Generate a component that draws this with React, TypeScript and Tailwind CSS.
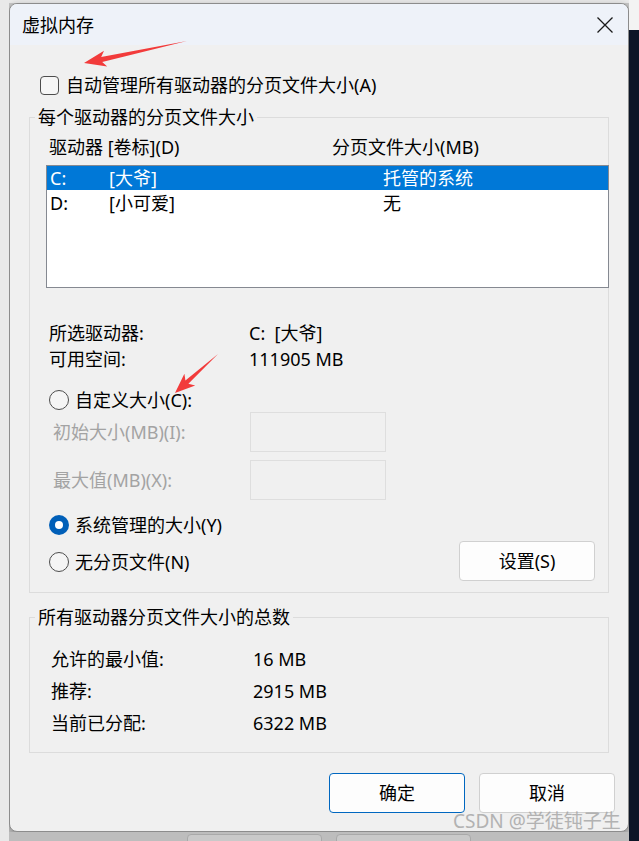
import React from "react";

function Radio({ checked }: { checked?: boolean }) {
  if (checked) {
    return (
      <div className="w-[20px] h-[20px] rounded-full bg-[#005fb8] flex items-center justify-center shrink-0">
        <div className="w-[8px] h-[8px] rounded-full bg-white" />
      </div>
    );
  }
  return <div className="w-[20px] h-[20px] rounded-full border border-[#4d4d4d] bg-[#f5f5f5] shrink-0" />;
}

export default function App() {
  return (
    <div className="relative w-[639px] h-[841px] overflow-hidden flex font-[family-name:Noto_Sans,Noto_Sans_CJK_SC,sans-serif] text-[18px] text-black">
      {/* left background strip */}
      <div className="w-[9px] bg-[#e9e9e9]" />
      {/* middle column */}
      <div className="w-[620px] h-[841px] flex flex-col bg-[#c9c9c9] overflow-hidden">
        <div className="h-[3px] bg-[#ececec] shrink-0" />
        <div className="h-[829px] shrink-0 rounded-[8px] border border-[#8c8c8c] overflow-hidden flex flex-col bg-[#f0f0f0] shadow-[0_3px_10px_rgba(0,0,0,0.35)]">
          {/* title bar */}
          <div className="h-[41px] bg-[#eef2f9] flex items-center justify-between pl-[12px] pr-[14px] shrink-0">
            <span className="leading-[20px]">虚拟内存</span>
            <svg width="18" height="18" viewBox="0 0 18 18">
              <path d="M1.5 1.5 L16.5 16.5 M16.5 1.5 L1.5 16.5" stroke="#1a1a1a" strokeWidth="1.3" />
            </svg>
          </div>
          {/* body */}
          <div className="flex-1 flex flex-col pl-[19px] leading-[20px]">
            {/* checkbox */}
            <div className="mt-[28px] h-[24px] flex items-center pl-[11px]">
              <div className="w-[19px] h-[19px] rounded-[4px] border border-[#4d4d4d] bg-[#f6f6f6]" />
              <span className="ml-[7px]">自动管理所有驱动器的分页文件大小(A)</span>
            </div>
            {/* group 1 */}
            <fieldset className="mt-[10px] w-[580px] border border-[#dcdcdc] p-0 m-0 min-w-0">
              <legend className="ml-[5px] px-[3px] leading-[20px]">每个驱动器的分页文件大小</legend>
              <div className="flex flex-col">
                <div className="mt-[10px] h-[20px] flex pl-[19px]">
                  <span className="w-[283px]">驱动器 [卷标](D)</span>
                  <span>分页文件大小(MB)</span>
                </div>
                <div className="mt-[8px] ml-[16px] w-[563px] h-[123px] border border-[#858991] bg-white">
                  <div className="h-[24px] bg-[#0078d7] text-white flex items-center pl-[3px]">
                    <span className="w-[59px]">C:</span>
                    <span className="w-[274px]">[大爷]</span>
                    <span>托管的系统</span>
                  </div>
                  <div className="h-[25px] flex items-center pl-[3px]">
                    <span className="w-[59px]">D:</span>
                    <span className="w-[274px]">[小可爱]</span>
                    <span>无</span>
                  </div>
                </div>
                <div className="mt-[32px] h-[26px] flex items-center pl-[19px]">
                  <span className="w-[200px]">所选驱动器:</span>
                  <span className="whitespace-pre">C:  [大爷]</span>
                </div>
                <div className="h-[26px] flex items-center pl-[19px]">
                  <span className="w-[200px]">可用空间:</span>
                  <span>111905 MB</span>
                </div>
                <div className="mt-[16px] h-[24px] flex items-center pl-[19px]">
                  <Radio />
                  <span className="ml-[6px]">自定义大小(C):</span>
                </div>
                <div className="h-[40px] flex items-center pl-[23px]">
                  <span className="w-[197px] text-[#a3a3a3]">初始大小(MB)(I):</span>
                  <div className="w-[136px] h-[40px] border border-[#dedede] bg-[#f0f0f0]" />
                </div>
                <div className="mt-[8px] h-[40px] flex items-center pl-[23px]">
                  <span className="w-[197px] text-[#a3a3a3]">最大值(MB)(X):</span>
                  <div className="w-[136px] h-[40px] border border-[#dedede] bg-[#f0f0f0]" />
                </div>
                <div className="mt-[13px] h-[24px] flex items-center pl-[19px]">
                  <Radio checked />
                  <span className="ml-[6px]">系统管理的大小(Y)</span>
                </div>
                <div className="mt-[4px] h-[40px] flex items-center justify-between pl-[19px] pr-[13px] mb-[11px]">
                  <div className="flex items-center pt-[2px]">
                    <Radio />
                    <span className="ml-[6px]">无分页文件(N)</span>
                  </div>
                  <div className="w-[136px] h-[40px] rounded-[4px] border border-[#d0d0d0] bg-[#fdfdfd] flex items-center justify-center">
                    设置(S)
                  </div>
                </div>
              </div>
            </fieldset>
            {/* group 2 */}
            <fieldset className="mt-[14px] w-[580px] border border-[#dcdcdc] p-0 m-0 min-w-0">
              <legend className="ml-[5px] px-[3px] leading-[20px]">所有驱动器分页文件大小的总数</legend>
              <div className="flex flex-col pt-[16px] pb-[13px] pl-[21px]">
                <div className="h-[32px] flex items-center">
                  <span className="w-[202px]">允许的最小值:</span>
                  <span>16 MB</span>
                </div>
                <div className="h-[32px] flex items-center">
                  <span className="w-[202px]">推荐:</span>
                  <span>2915 MB</span>
                </div>
                <div className="h-[32px] flex items-center">
                  <span className="w-[202px]">当前已分配:</span>
                  <span>6322 MB</span>
                </div>
              </div>
            </fieldset>
            {/* buttons */}
            <div className="mt-[20px] flex justify-end gap-[14px] pr-[13px]">
              <div className="w-[136px] h-[40px] rounded-[4px] border border-[#0067c0] bg-[#fdfdfd] flex items-center justify-center">
                确定
              </div>
              <div className="w-[136px] h-[40px] rounded-[4px] border border-[#d0d0d0] bg-[#fdfdfd] flex items-center justify-center">
                取消
              </div>
            </div>
          </div>
        </div>
        {/* bottom background */}
        <div className="flex-1 flex gap-[14px] pl-[178px] pt-[2px] bg-[#bdbdbd] overflow-hidden">
          <div className="w-[135px] h-[20px] rounded-[4px] border border-[#a9a9a9] bg-[#c9c9c9]" />
          <div className="w-[135px] h-[20px] rounded-[4px] border border-[#a9a9a9] bg-[#c9c9c9]" />
        </div>
      </div>
      {/* right background strip */}
      <div className="flex-1 flex flex-col">
        <div className="h-[30px] bg-[#f3f3f3]" />
        <div className="flex-1 bg-[#0c1526]" />
      </div>

      {/* red annotation arrows */}
      <svg className="absolute left-0 top-0 pointer-events-none" width="639" height="841">
        <polygon points="187,41 102.2,61.9 107.2,66.4 84,63 104,50.8 101.2,57" fill="#f23b3b" />
        <polygon points="218,354 188.4,383.8 195.2,385.5 175,393 184.4,373.7 185.4,380.6" fill="#f23b3b" />
      </svg>

      {/* watermark */}
      <div className="absolute left-[453px] top-[810px] text-[19px] leading-[22px] text-[#a3a3a3] opacity-80 pointer-events-none whitespace-pre">
        CSDN @学徒钝子生
      </div>
    </div>
  );
}
